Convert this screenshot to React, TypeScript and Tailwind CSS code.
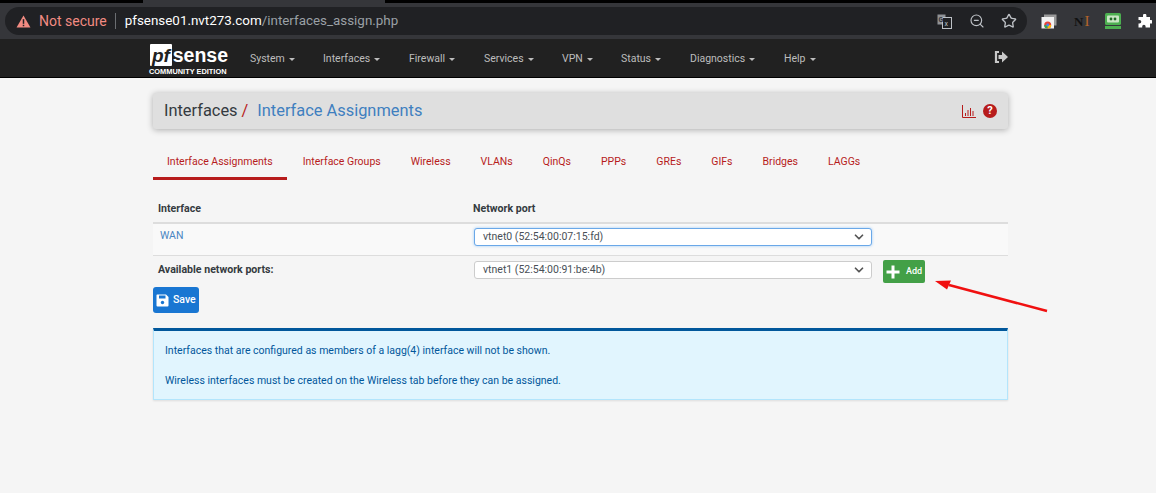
import React from "react";
import { ChevronDown, ZoomOut, Star } from "lucide-react";

const nav: [string, string][] = [
  ["System", "w-[73px]"], ["Interfaces", "w-[86px]"], ["Firewall", "w-[75px]"], ["Services", "w-[78px]"],
  ["VPN", "w-[59px]"], ["Status", "w-[69px]"], ["Diagnostics", "w-[94px]"], ["Help", "w-[62px]"],
];
const tabs = ["Interface Assignments", "Interface Groups", "Wireless", "VLANs", "QinQs", "PPPs", "GREs", "GIFs", "Bridges", "LAGGs"];

function Caret() {
  return <span className="ml-[4px] inline-block w-0 h-0 border-x-[3.5px] border-x-transparent border-t-[3.5px] border-t-[#bdbdbd] align-middle" />;
}

function Select({ value, focus }: { value: string; focus?: boolean }) {
  return (
    <div className={`w-[398px] h-[18px] bg-white rounded-[3px] border flex items-center pl-[8px] pr-[5px] text-[#495057] text-[10.5px] ${focus ? "border-[#6aa8e8] shadow-[0_0_3px_#9cc8f5]" : "border-[#cccccc]"}`}>
      <span className="flex-1">{value}</span>
      <ChevronDown size={14} strokeWidth={3} className="text-[#555]" />
    </div>
  );
}

export default function App() {
  return (
    <div className="relative w-[1156px] h-[493px] overflow-hidden bg-[#f5f5f5] font-['Roboto',sans-serif]">
      {/* browser chrome */}
      <div className="h-[3px] bg-black flex pl-[143px]"><div className="w-[242px] bg-[#35363a]" /></div>
      <div className="h-[36px] bg-[#35363a] flex items-center pl-[5px]">
        <div className="w-[1022px] h-[28px] rounded-[14px] bg-[#202124] flex items-center pl-[11px] pr-[10px]">
          <svg width="15" height="13" viewBox="0 0 16 14"><path d="M8 0.5 L15.5 13.5 H0.5 Z" fill="#f28b82" /><rect x="7.2" y="4.5" width="1.6" height="5" fill="#202124" /><rect x="7.2" y="10.5" width="1.6" height="1.6" fill="#202124" /></svg>
          <span className="ml-[8px] text-[14px] text-[#f28b82]">Not secure</span>
          <span className="ml-[8px] w-px h-[16px] bg-[#6b6e72]" />
          <span className="ml-[9px] text-[13.4px] text-white">pfsense01.nvt273.com<span className="text-[#9aa0a6]">/interfaces_assign.php</span></span>
          <span className="flex-1" />
          <svg width="15" height="15" viewBox="0 0 15 15">
            <rect x="0.5" y="0.5" width="8" height="10" fill="#8f9296" />
            <rect x="5.5" y="3.5" width="9" height="11" fill="#202124" stroke="#bdc1c6" />
            <text x="1.5" y="8" fontSize="7" fontWeight="700" fill="#35363a" fontFamily="Roboto, sans-serif">G</text>
            <text x="7.5" y="12" fontSize="7" fill="#bdc1c6" fontFamily="Roboto, sans-serif">x</text>
          </svg>
          <ZoomOut size={16} strokeWidth={1.7} className="ml-[17px] text-[#bdc1c6]" />
          <Star size={16} strokeWidth={2} className="ml-[16px] text-[#bdc1c6]" />
        </div>
        <svg className="ml-[14px]" width="16" height="15" viewBox="0 0 16 15">
          <rect x="3" y="0.5" width="12.5" height="11" fill="#9a9a9a" />
          <rect x="0.5" y="3" width="12.5" height="11.5" fill="#f1f1f1" />
          <circle cx="6.7" cy="11" r="3.5" fill="#ea4335" />
          <path d="M6.7 11 L3.2 11 A3.5 3.5 0 0 0 6.7 14.5 Z" fill="#34a853" />
          <path d="M6.7 11 L6.7 14.5 A3.5 3.5 0 0 0 10.2 11 Z" fill="#fbbc05" />
          <circle cx="6.7" cy="11" r="1.4" fill="#4285f4" />
        </svg>
        <div className="ml-[17px] w-[15px] text-[13px] leading-none font-bold text-[#111] font-['Liberation_Serif',serif] flex items-center">N<span className="ml-[1px] text-[15px] text-[#b5652a] font-normal">I</span></div>
        <svg className="ml-[16px]" width="16" height="16" viewBox="0 0 16 16">
          <rect x="0" y="0" width="16" height="12" rx="1.5" fill="#4caf50" />
          <rect x="2" y="2.5" width="12" height="7" rx="1" fill="#c9e6c4" />
          <circle cx="6" cy="6" r="1.4" fill="#1f6b25" />
          <circle cx="10" cy="6" r="1.4" fill="#1f6b25" />
          <rect x="0" y="13" width="16" height="3" fill="#4caf50" />
        </svg>
        <svg className="ml-[17px]" width="14" height="14" viewBox="0 0 14 14"><path d="M5 1.5 A1.7 1.7 0 0 1 8.4 1.5 V3 H12 V6 H13 A1.8 1.8 0 0 1 13 9.6 H12 V13.5 H7.6 V12.4 A1.7 1.7 0 0 0 4.2 12.4 V13.5 H0.5 V9.6 H1.5 A1.8 1.8 0 0 0 1.5 6 H0.5 V3 H5 Z" fill="#fff" /></svg>
      </div>

      {/* navbar */}
      <div className="h-[39px] bg-[#212121] border-b border-black flex items-start pl-[150px]">
        <div className="w-[78px] h-[36px] pt-[5px]">
          <div className="flex items-center">
            <div className="w-[23px] h-[22px] bg-white rounded-[1px] flex items-center justify-center text-[#212121] text-[19px] italic font-bold leading-none font-['Liberation_Sans',sans-serif]">pf</div>
            <span className="ml-[1px] text-white font-bold text-[19.5px] leading-[22px] font-['Liberation_Sans',sans-serif]">sense</span>
          </div>
          <div className="text-white text-[7.4px] font-bold leading-[9px] whitespace-nowrap font-['Liberation_Sans',sans-serif] mt-[1px] -ml-[1px]">COMMUNITY EDITION</div>
        </div>
        <div className="flex ml-[22px] mt-[13px] text-[#bdbdbd] text-[10.5px] leading-[14px]">
          {nav.map(([n, w]) => (
            <div key={n} className={`${w} whitespace-nowrap`}>{n}<Caret /></div>
          ))}
        </div>
        <svg className="absolute left-[994px] top-[51px]" width="14" height="12" viewBox="0 0 14 12">
          <path d="M5 1 H2 V11 H5" fill="none" stroke="#c8c8c8" strokeWidth="2.2" />
          <path d="M4.5 4 H8 V0.5 L14 6 L8 11.5 V8 H4.5 Z" fill="#c8c8c8" />
        </svg>
      </div>

      {/* content */}
      <div className="ml-[153px] w-[855px] pt-[15px]">
        <div className="h-[36px] bg-[#dfdfdf] rounded-[3px] shadow-[0_1px_6px_rgba(0,0,0,0.3)] flex items-center pl-[11px] pr-[11px]">
          <span className="pt-px text-[16.4px] text-[#343a40]">Interfaces</span>
          <span className="pt-px text-[16.4px] text-[#b71c1c] ml-[4px]">/</span>
          <span className="pt-px text-[16.4px] text-[#3f7fbf] ml-[9px]">Interface Assignments</span>
          <span className="flex-1" />
          <svg width="14" height="13" viewBox="0 0 14 13" className="mr-[7px]">
            <path d="M0.5 0 V12.5 H14" fill="none" stroke="#b71c1c" strokeWidth="1" />
            <path d="M3.5 8 V11 M6 5 V11 M8.5 3 V11 M11 6 V11" stroke="#b71c1c" strokeWidth="1" />
          </svg>
          <span className="w-[14px] h-[14px] rounded-full bg-[#b71c1c] text-white text-[11px] font-bold leading-[14px] text-center">?</span>
        </div>

        <div className="mt-[10px] h-[41px] flex text-[10.5px] text-[#b71c1c]">
          {tabs.map((t, i) => (
            <div key={t} className={`h-[41px] pt-[15px] whitespace-nowrap ${i === 0 ? "pl-[14px] pr-[14px] mr-px border-b-[3px] border-[#b71c1c]" : "px-[15px]"}`}>{t}</div>
          ))}
        </div>

        <div className="mt-[20px] h-[24px] pt-px border-b-2 border-[#dddddd] flex text-[10.6px] font-bold text-[#343a40]">
          <div className="w-[314px] pl-[5px]">Interface</div>
          <div className="pl-[6px]">Network port</div>
        </div>
        <div className="h-[32px] bg-[#f9f9f9] border-b border-[#dddddd] flex">
          <div className="w-[321px] pl-[7px] pt-[4px] text-[10.5px] text-[#4a85c2]">WAN</div>
          <div className="pt-[4px]"><Select value="vtnet0 (52:54:00:07:15:fd)" focus /></div>
        </div>
        <div className="h-[31px] flex items-start">
          <div className="w-[321px] pl-[5px] pt-[6px] text-[10.6px] font-bold text-[#343a40]">Available network ports:</div>
          <div className="pt-[5px]"><Select value="vtnet1 (52:54:00:91:be:4b)" /></div>
          <div className="ml-[11px] mt-[4px] w-[42px] h-[23px] rounded-[2px] bg-[#43a047] flex items-center pl-[3px] text-white">
            <svg width="14" height="14" viewBox="0 0 14 14"><path d="M5.5 0.5 H8.5 V5.5 H13.5 V8.5 H8.5 V13.5 H5.5 V8.5 H0.5 V5.5 H5.5 Z" fill="#fff" /></svg>
            <span className="ml-[6px] text-[9px] font-medium">Add</span>
          </div>
        </div>
        <div className="w-[46px] h-[26px] rounded-[3px] bg-[#1976d2] flex items-center pl-[3px] text-white">
          <svg width="13" height="13" viewBox="0 0 13 13"><path d="M1 0.5 H10 L12.5 3 V11.5 A1 1 0 0 1 11.5 12.5 H1.5 A1 1 0 0 1 0.5 11.5 V1 Z" fill="#fff" /><rect x="3" y="1.5" width="6.5" height="3" fill="#1976d2" /><circle cx="6.5" cy="8.5" r="1.7" fill="#1976d2" /></svg>
          <span className="ml-[4px] text-[10.5px] font-medium">Save</span>
        </div>

        <div className="mt-[15px] h-[72px] bg-[#e1f5fe] border-t-[3px] border-t-[#01579b] border-x border-b border-x-[#b3e5fc] border-b-[#b3e5fc] shadow-[0_1px_2px_rgba(0,0,0,0.1)] pl-[11px] pt-[13px] text-[10.5px] text-[#01579b] leading-[13px]">
          <div>Interfaces that are configured as members of a lagg(4) interface will not be shown.</div>
          <div className="mt-[17px]">Wireless interfaces must be created on the Wireless tab before they can be assigned.</div>
        </div>
      </div>

      {/* annotation arrow */}
      <svg className="absolute left-[930px] top-[275px]" width="125" height="42" viewBox="0 0 125 42">
        <path d="M117 36 L19 10" stroke="#f01010" strokeWidth="2.6" />
        <path d="M5 6 L21 5.5 L17 14.5 Z" fill="#f01010" />
      </svg>
    </div>
  );
}
